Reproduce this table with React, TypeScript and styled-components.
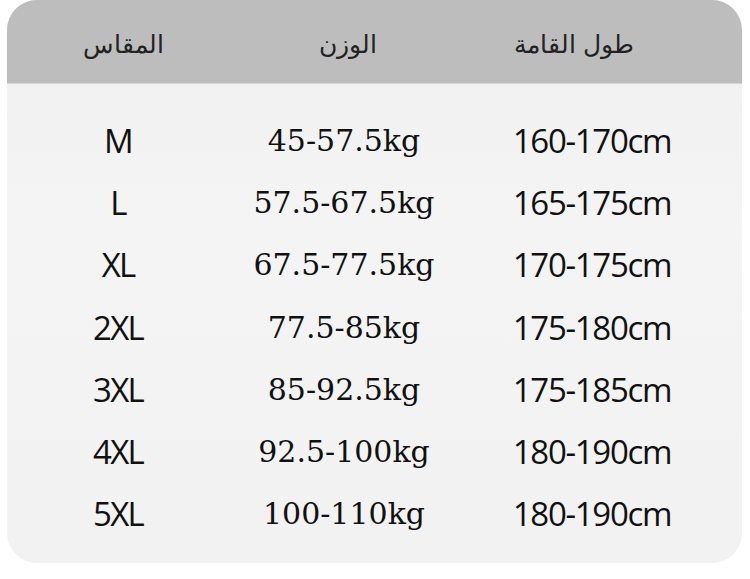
import React from "react";
import styled, { createGlobalStyle } from "styled-components";

const Global = createGlobalStyle`
  html, body { margin: 0; padding: 0; background: #ffffff; }
  body { width: 750px; height: 579px; overflow: hidden; }
`;

const Page = styled.div`
  width: 750px;
  height: 579px;
  padding: 0 8px 16px 7px;
  box-sizing: border-box;
  background: #ffffff;
`;

const Card = styled.div`
  height: 563px;
  border-radius: 30px;
  overflow: hidden;
  display: flex;
  flex-direction: column;
  background: linear-gradient(180deg, #f0f0f0 0%, #f4f4f4 40%, #f2f2f2 100%);
`;

const Header = styled.div`
  height: 84px;
  background: #bdbdbd;
  display: grid;
  grid-template-columns: 232px 218px 234px 1fr;
  align-items: center;
  padding-top: 6px;
  box-sizing: border-box;
  border-bottom: 1px solid #d6d6d6;
`;

const HeadCell = styled.div`
  text-align: center;
  font-family: "DejaVu Sans", "Noto Sans", sans-serif;
  font-size: 25px;
  font-weight: 300;
  color: #222222;
  direction: rtl;
`;

const Body = styled.div`
  padding-top: 25px;
  display: flex;
  flex-direction: column;
`;

const Row = styled.div`
  height: 62.3px;
  display: grid;
  grid-template-columns: 222px 230px 266px 1fr;
  align-items: center;
  color: #111111;
`;

const SizeCell = styled.div`
  text-align: center;
  font-family: "Open Sans", "Noto Sans", sans-serif;
  font-size: 33px;
  font-weight: 400;
  letter-spacing: -1.8px;
`;

const WeightCell = styled.div`
  text-align: center;
  font-family: "DejaVu Serif", serif;
  font-size: 30px;
  letter-spacing: 0px;
`;

const HeightCell = styled.div`
  text-align: center;
  font-family: "Open Sans", "Noto Sans", sans-serif;
  font-size: 33px;
  letter-spacing: -1.3px;
`;

const rows = [
  ["M", "45-57.5kg", "160-170cm"],
  ["L", "57.5-67.5kg", "165-175cm"],
  ["XL", "67.5-77.5kg", "170-175cm"],
  ["2XL", "77.5-85kg", "175-180cm"],
  ["3XL", "85-92.5kg", "175-185cm"],
  ["4XL", "92.5-100kg", "180-190cm"],
  ["5XL", "100-110kg", "180-190cm"],
];

export default function App() {
  return (
    <>
      <Global />
      <Page>
        <Card>
          <Header>
            <HeadCell>المقاس</HeadCell>
            <HeadCell>الوزن</HeadCell>
            <HeadCell>طول القامة</HeadCell>
          </Header>
          <Body>
            {rows.map((r) => (
              <Row key={r[0]}>
                <SizeCell>{r[0]}</SizeCell>
                <WeightCell>{r[1]}</WeightCell>
                <HeightCell>{r[2]}</HeightCell>
              </Row>
            ))}
          </Body>
        </Card>
      </Page>
    </>
  );
}
